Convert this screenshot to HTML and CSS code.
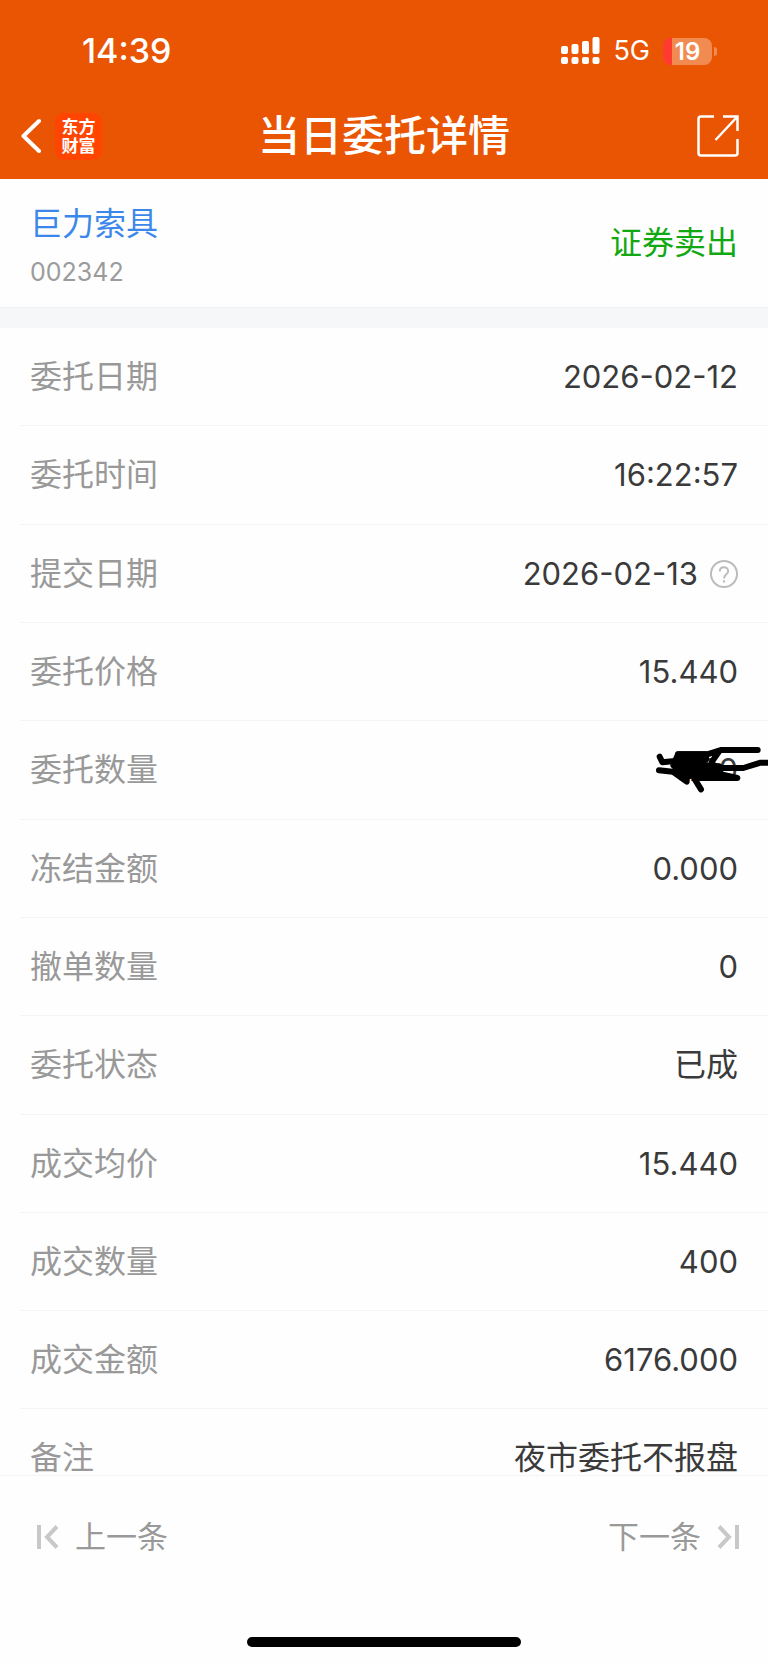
FILE: index.html
```
<!DOCTYPE html>
<html lang="zh-CN">
<head>
<meta charset="utf-8">
<meta name="viewport" content="width=device-width, initial-scale=1">
<title>当日委托详情</title>
<link rel="stylesheet" href="styles.css">
</head>
<body>
<div class="screen">
  <header class="header">
    <div class="status">
      <time class="clock">14:39</time>
      <div class="status-right">
        <svg class="signal" width="40" height="28" viewBox="0 0 40 28" fill="#fff" aria-hidden="true">
          <rect x="0" y="9" width="7" height="8" rx="2"/><rect x="10.5" y="7" width="7" height="10" rx="2"/><rect x="21" y="4" width="7" height="13" rx="2"/><rect x="31.5" y="0" width="7" height="17" rx="2"/>
          <rect x="0" y="20" width="7" height="7" rx="2"/><rect x="10.5" y="20" width="7" height="7" rx="2"/><rect x="21" y="20" width="7" height="7" rx="2"/><rect x="31.5" y="20" width="7" height="7" rx="2"/>
        </svg>
        <span class="network">5G</span>
        <span class="battery"><span class="battery-body">19</span><span class="battery-tip"></span></span>
      </div>
    </div>
    <nav class="nav">
      <div class="nav-left">
        <button class="icon-button" aria-label="返回">
          <svg width="20" height="36" viewBox="0 0 20 36" fill="none" stroke="#fff" stroke-width="4" stroke-linecap="round" stroke-linejoin="round"><path d="M18 3 2.5 18 18 33"/></svg>
        </button>
        <span class="logo">东方<br>财富</span>
      </div>
      <h1 class="title">当日委托详情</h1>
      <div class="nav-right">
        <button class="icon-button" aria-label="分享">
          <svg width="42" height="42" viewBox="0 0 42 42" fill="none" stroke="#fff" stroke-width="2.5"><path d="M17 1.500H4Q1.500 1.500 1.500 4V38Q1.500 40.500 4 40.500H38Q40.500 40.500 40.500 38V24M26 1.500H40.500V16M40 2 18.500 25"/></svg>
        </button>
      </div>
    </nav>
  </header>

  <section class="stock">
    <div class="stock-id">
      <a class="stock-name" href="#">巨力索具</a>
      <span class="stock-code">002342</span>
    </div>
    <span class="side">证券卖出</span>
  </section>

  <dl class="list">
    <div class="row"><dt>委托日期</dt><dd class="number">2026-02-12</dd></div>
    <div class="row"><dt>委托时间</dt><dd class="number">16:22:57</dd></div>
    <div class="row"><dt>提交日期</dt><dd class="number">2026-02-13
      <button class="icon-button" aria-label="说明">
        <svg width="28" height="28" viewBox="0 0 28 28" fill="none" stroke="#bcbcbc" stroke-width="2"><circle cx="14" cy="14" r="13"/><path d="M9.800 11.500C9.800 5.800 18.200 5.800 18.200 11.200C18.200 14.200 14 14.500 14 18.500M14 20.200V22.500"/></svg>
      </button></dd></div>
    <div class="row"><dt>委托价格</dt><dd class="number">15.440</dd></div>
    <div class="row"><dt>委托数量</dt><dd class="number">400</dd>
      <svg class="scribble" width="138" height="90" viewBox="0 0 414 270" fill="none" stroke="#000" stroke-width="18" stroke-linecap="round" stroke-linejoin="round" aria-hidden="true">
        <path fill="#000" d="M144 100H228L228 116 192 124 205 158 168 168 130 133Z"/>
        <path d="M89 107 97 124 135 120M87 148 128 152 170 182V163M195 176 213 205M144 100 232 100 272 87H383M268 90 246 122M190 130 268 136 270 152 200 148M200 166 262 160M180 138 240 153 322 171 200 170M240 141 340 141 392 125H420"/>
      </svg>
    </div>
    <div class="row"><dt>冻结金额</dt><dd class="number">0.000</dd></div>
    <div class="row"><dt>撤单数量</dt><dd class="number">0</dd></div>
    <div class="row"><dt>委托状态</dt><dd>已成</dd></div>
    <div class="row"><dt>成交均价</dt><dd class="number">15.440</dd></div>
    <div class="row"><dt>成交数量</dt><dd class="number">400</dd></div>
    <div class="row"><dt>成交金额</dt><dd class="number">6176.000</dd></div>
    <div class="row"><dt>备注</dt><dd>夜市委托不报盘</dd></div>
  </dl>

  <footer class="footer">
    <div class="pager">
      <button class="page-button">
        <svg width="24" height="24" viewBox="0 0 24 24" fill="none" stroke="#c8c8c8" stroke-width="4"><path d="M3 0V24M21 1.500 11 12 21 22.500"/></svg>
        <span>上一条</span>
      </button>
      <button class="page-button">
        <span>下一条</span>
        <svg width="24" height="24" viewBox="0 0 24 24" fill="none" stroke="#c8c8c8" stroke-width="4"><path d="M21 0V24M3 1.500 13 12 3 22.500"/></svg>
      </button>
    </div>
    <div class="home-bar"></div>
  </footer>
</div>
</body>
</html>
```
FILE: styles.css
```
* {
  box-sizing: border-box;
}

body {
  margin: 0;
  background: #fefefe;
  color: #3a3a3a;
  font-family: Inter, "Noto Sans CJK SC", sans-serif;
  font-size: 32px;
  line-height: 46px;
}

button {
  padding: 0;
  border: 0;
  background: none;
  color: inherit;
  font: inherit;
}

svg {
  display: block;
}

.screen {
  display: flex;
  flex-direction: column;
  height: 100vh;
}

.header {
  padding-bottom: 13px;
  background: #ea5504;
  color: #fff;
}

.status {
  display: flex;
  align-items: center;
  justify-content: space-between;
  padding: 28px 51px 0 82px;
}

.clock {
  font-size: 34px;
  font-weight: 500;
}

.status-right {
  display: flex;
  align-items: center;
}

.network {
  margin: 0 13px 0 12px;
  font-size: 27px;
}

.battery {
  display: flex;
  align-items: center;
  gap: 2px;
}

.battery-body {
  width: 49px;
  height: 27px;
  border-radius: 8px;
  background: linear-gradient(to right, #ff3b30 9px, #f28b52 9px);
  font-size: 24px;
  font-weight: 600;
  line-height: 27px;
  text-align: center;
}

.battery-tip {
  width: 3px;
  height: 9px;
  border-radius: 0 3px 3px 0;
  background: #f28b52;
}

.nav {
  display: grid;
  grid-template-columns: 1fr auto 1fr;
  align-items: center;
  padding: 32px 21px 0;
}

.nav-left {
  display: flex;
  align-items: center;
  gap: 14px;
}

.nav-right {
  display: flex;
  justify-content: flex-end;
  padding-right: 8px;
}

.logo {
  width: 47px;
  height: 47px;
  padding-top: 3px;
  border-radius: 9px;
  background: #ff4500;
  font-family: "Noto Sans CJK SC", sans-serif;
  font-size: 17px;
  font-weight: 700;
  line-height: 19px;
  text-align: center;
}

.title {
  margin: 0;
  font-size: 42px;
  font-weight: 500;
  line-height: 60px;
}

.stock {
  display: flex;
  align-items: flex-start;
  justify-content: space-between;
  padding: 22px 30px 12px;
  border-bottom: 1px solid #f2f2f2;
}

.stock-id {
  display: flex;
  flex-direction: column;
  gap: 2px;
}

.stock-name {
  color: #3b87ea;
  text-decoration: none;
}

.stock-code {
  color: #9b9b9b;
  font-size: 25px;
}

.side {
  padding-top: 19px;
  color: #12a812;
}

.list {
  display: grid;
  flex: 1;
  grid-template-rows: repeat(11, minmax(0, 3fr)) minmax(0, 2fr);
  min-height: 0;
  margin: 0;
  padding-left: 20px;
  border-top: 20px solid #f5f7f9;
  overflow: hidden;
}

.row {
  position: relative;
  display: flex;
  align-items: flex-start;
  justify-content: space-between;
  padding: 26px 30px 0 10px;
  border-bottom: 1px solid #f4f4f4;
}

.row:last-child {
  border-bottom: 0;
}

.row dt {
  color: #999;
}

.row dd {
  display: flex;
  align-items: center;
  gap: 12px;
  margin: 0;
}

.row .number {
  font-size: 31px;
}

.scribble {
  position: absolute;
  top: 0;
  right: 0;
}

.footer {
  padding: 38px 0 17px;
  border-top: 1px solid #f4f4f4;
  color: #999;
}

.pager {
  display: flex;
  justify-content: space-between;
  padding: 0 28px 0 36px;
}

.page-button {
  display: flex;
  align-items: center;
  gap: 15px;
  font-size: 31px;
}

.home-bar {
  width: 274px;
  height: 10px;
  margin: 77px auto 0;
  border-radius: 5px;
  background: #000;
}
```
